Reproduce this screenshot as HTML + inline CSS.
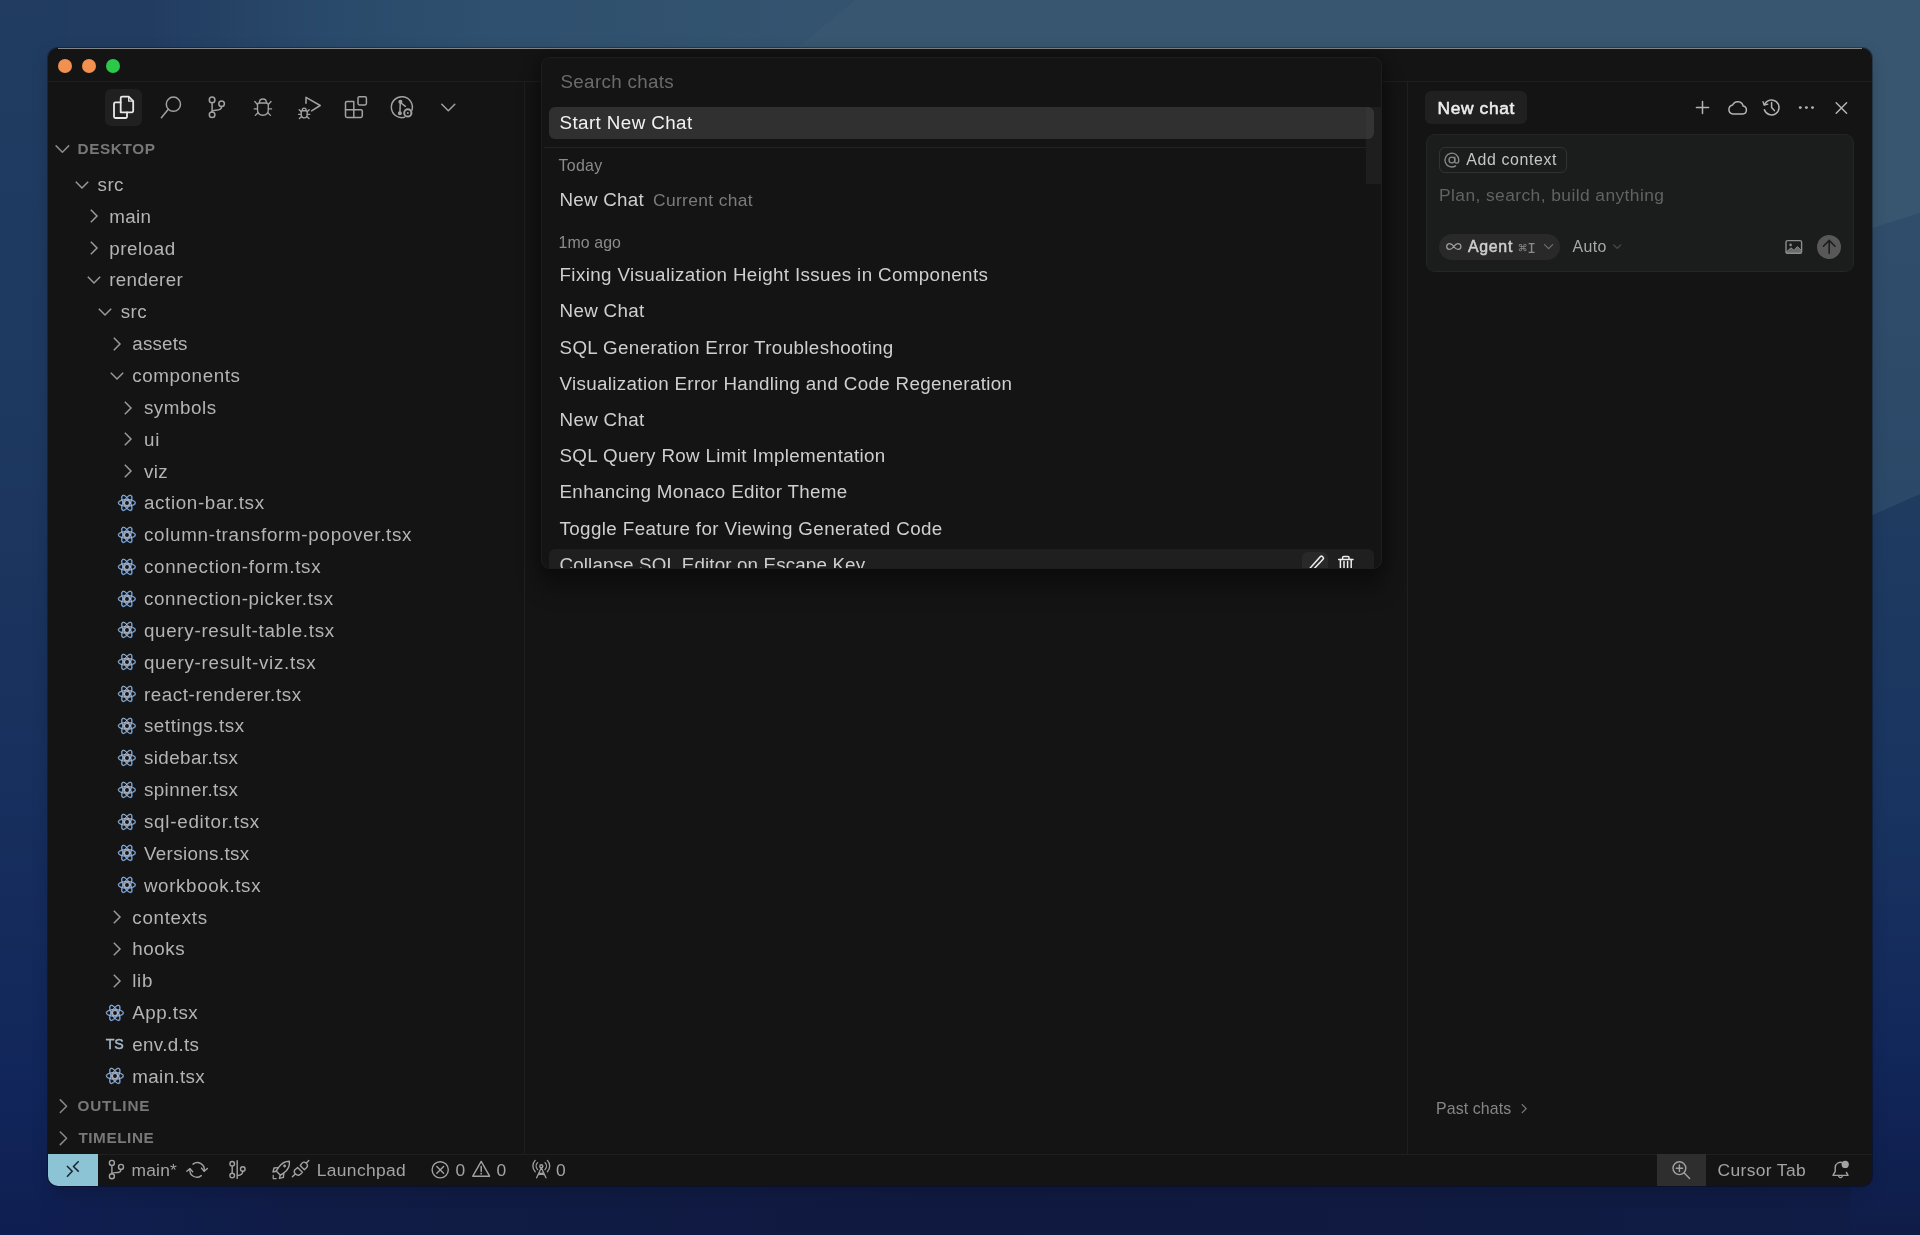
<!DOCTYPE html>
<html lang="en">
<head>
<meta charset="utf-8">
<title>Cursor - Search chats</title>
<style>
*{box-sizing:border-box}
html,body{margin:0;padding:0}
body{width:1920px;height:1235px;overflow:hidden;position:relative;
  font-family:"Liberation Sans",Arial,sans-serif;color:#b2b2b2;
  background:linear-gradient(180deg,#213c60 0px,#1e3960 400px,#172f5d 800px,#11255a 1100px,#0f1e50 1235px);
}
.ab{position:absolute}
.wtop{left:0;top:0;width:1920px;height:70px;background:linear-gradient(90deg,#213c60 0,#213c60 150px,#2a4a6b 330px,#2f506e 500px,#33536f 800px,#34546f 1920px)}
.wtop2{left:0;top:0;width:1920px;height:70px;background:#38566f;clip-path:polygon(855px 0,1920px 0,1920px 70px,771px 70px)}
.wright{left:1850px;top:0;width:70px;height:1235px;background:linear-gradient(180deg,#1f3b60 0,#1f3b60 520px,#193460 800px,#12275a 1050px,#0f1f4e 1190px,#101c46 1235px)}
.wright2{left:1850px;top:0;width:70px;height:540px;background:linear-gradient(180deg,#304d6b 0,#304d6b 230px,#2b4868 520px);clip-path:polygon(0 0,70px 0,70px 494px,0 525px)}
.wright3{left:1850px;top:0;width:70px;height:260px;background:#38566f;clip-path:polygon(0 0,70px 0,70px 213px,0 235px)}
.wbot{left:0;top:1170px;width:1920px;height:65px;background:linear-gradient(90deg,#0f1f52 0,#101c46 300px,#101a40 960px,#101b42 1500px,#101c46 1920px)}
.wtl{left:0;top:0;width:70px;height:1235px;background:linear-gradient(180deg,#213c60 0px,#1e3960 400px,#172f5d 800px,#11255a 1100px,#0f1e50 1235px);-webkit-mask-image:linear-gradient(90deg,#000 0,#000 40px,transparent 70px);mask-image:linear-gradient(90deg,#000 0,#000 40px,transparent 70px)}
.win{left:48px;top:48px;width:1824px;height:1138px;background:#141414;border-radius:10px;
  box-shadow:0 0 0 1px rgba(0,0,0,.3),0 6px 18px rgba(0,0,0,.14)}
.clip{left:0;top:0;width:1920px;height:1235px;clip-path:inset(48px 48px 49px 48px round 10px);will-change:transform;transform:translateZ(0)}
.hl{left:58px;top:48px;width:1804px;height:1px;background:rgba(255,255,255,.48)}
.line{background:#1f1f1f}
.tl{width:14px;height:14px;border-radius:50%;top:59px}
.hdr{font-size:15.3px;font-weight:700;color:#787878;letter-spacing:.42px;line-height:32px;white-space:nowrap}
.tr{font-size:18.8px;letter-spacing:.6px;line-height:31.86px;height:31.86px;white-space:nowrap;color:#b4b4b4}
.tsi{font-size:14.2px;font-weight:400;-webkit-text-stroke:.45px #a9b9cc;color:#a9b9cc;letter-spacing:-.2px;width:20px;text-align:center}
.sb{font-size:17.4px;line-height:33.4px;color:#a4a4a4;white-space:nowrap;letter-spacing:.35px;top:1154px}
.pop{left:541px;top:57px;width:841px;height:512px;background:#141414;border:1px solid #1e1e1e;border-radius:9px;overflow:hidden;
  }
.popsh{left:541px;top:57px;width:841px;height:512px;border-radius:9px;box-shadow:0 18px 22px 2px rgba(0,0,0,.32),0 0 16px 2px rgba(0,0,0,.3)}
.ci{font-size:18.8px;letter-spacing:.36px;line-height:36px;height:36px;white-space:nowrap;color:#cfcfcf}
.cg{font-size:15.9px;letter-spacing:.3px;line-height:24px;color:#8c8c8c;white-space:nowrap}
</style>
</head>
<body>
<div class="ab wtop"></div><div class="ab wtop2"></div><div class="ab wbot"></div><div class="ab wright"></div><div class="ab wright2"></div><div class="ab wright3"></div><div class="ab wtl"></div>
<div class="ab win"></div>
<div class="ab hl"></div>
<div class="ab clip">
  <!-- title bar -->
  <div class="ab line" style="left:48px;top:81px;width:1824px;height:1px"></div>
  <div class="ab tl" style="left:58px;background:#f2914f"></div>
  <div class="ab tl" style="left:82px;background:#f2914f"></div>
  <div class="ab tl" style="left:106px;background:#2bc84a"></div>

  <!-- sidebar -->
  <div class="ab line" style="left:524px;top:82px;width:1px;height:1072px"></div>
  <div class="ab" style="left:105px;top:89px;width:37px;height:37px;border-radius:6px;background:#202020"></div>
  <div class="ab hdr" style="left:77.6px;top:133px;letter-spacing:.6px">DESKTOP</div>
<svg class="ab" style="left:72.0px;top:174.5px" width="20" height="20" viewBox="-10 -10 20 20"><path d="M-6.2 -3.2 L0 3 L6.2 -3.2" fill="none" stroke="#9a9a9a" stroke-width="1.5"/></svg>
<div class="ab tr" style="left:97.6px;top:168.9px;letter-spacing:0.40px">src</div>
<svg class="ab" style="left:83.6px;top:206.4px" width="20" height="20" viewBox="-10 -10 20 20"><path d="M-3.2 -6.2 L3 0 L-3.2 6.2" fill="none" stroke="#9a9a9a" stroke-width="1.5"/></svg>
<div class="ab tr" style="left:109.2px;top:200.7px;letter-spacing:0.37px">main</div>
<svg class="ab" style="left:83.6px;top:238.2px" width="20" height="20" viewBox="-10 -10 20 20"><path d="M-3.2 -6.2 L3 0 L-3.2 6.2" fill="none" stroke="#9a9a9a" stroke-width="1.5"/></svg>
<div class="ab tr" style="left:109.2px;top:232.6px;letter-spacing:0.55px">preload</div>
<svg class="ab" style="left:83.6px;top:270.1px" width="20" height="20" viewBox="-10 -10 20 20"><path d="M-6.2 -3.2 L0 3 L6.2 -3.2" fill="none" stroke="#9a9a9a" stroke-width="1.5"/></svg>
<div class="ab tr" style="left:109.2px;top:264.4px;letter-spacing:0.36px">renderer</div>
<svg class="ab" style="left:95.2px;top:301.9px" width="20" height="20" viewBox="-10 -10 20 20"><path d="M-6.2 -3.2 L0 3 L6.2 -3.2" fill="none" stroke="#9a9a9a" stroke-width="1.5"/></svg>
<div class="ab tr" style="left:120.8px;top:296.3px;letter-spacing:0.40px">src</div>
<svg class="ab" style="left:106.7px;top:333.8px" width="20" height="20" viewBox="-10 -10 20 20"><path d="M-3.2 -6.2 L3 0 L-3.2 6.2" fill="none" stroke="#9a9a9a" stroke-width="1.5"/></svg>
<div class="ab tr" style="left:132.3px;top:328.2px;letter-spacing:0.18px">assets</div>
<svg class="ab" style="left:106.7px;top:365.6px" width="20" height="20" viewBox="-10 -10 20 20"><path d="M-6.2 -3.2 L0 3 L6.2 -3.2" fill="none" stroke="#9a9a9a" stroke-width="1.5"/></svg>
<div class="ab tr" style="left:132.3px;top:360.0px;letter-spacing:0.59px">components</div>
<svg class="ab" style="left:118.3px;top:397.5px" width="20" height="20" viewBox="-10 -10 20 20"><path d="M-3.2 -6.2 L3 0 L-3.2 6.2" fill="none" stroke="#9a9a9a" stroke-width="1.5"/></svg>
<div class="ab tr" style="left:143.9px;top:391.9px;letter-spacing:0.55px">symbols</div>
<svg class="ab" style="left:118.3px;top:429.4px" width="20" height="20" viewBox="-10 -10 20 20"><path d="M-3.2 -6.2 L3 0 L-3.2 6.2" fill="none" stroke="#9a9a9a" stroke-width="1.5"/></svg>
<div class="ab tr" style="left:143.9px;top:423.7px;letter-spacing:1.00px">ui</div>
<svg class="ab" style="left:118.3px;top:461.2px" width="20" height="20" viewBox="-10 -10 20 20"><path d="M-3.2 -6.2 L3 0 L-3.2 6.2" fill="none" stroke="#9a9a9a" stroke-width="1.5"/></svg>
<div class="ab tr" style="left:143.9px;top:455.6px;letter-spacing:0.40px">viz</div>
<svg class="ab" style="left:116.5px;top:493.0px" width="20" height="20" viewBox="-10 -10 20 20" fill="none" stroke="#7f9fca" stroke-width="1.15"><g stroke="#4f7db8" stroke-width="1.25"><ellipse rx="8.5" ry="3.3"/><ellipse rx="8.5" ry="3.3" transform="rotate(60)"/><ellipse rx="8.5" ry="3.3" transform="rotate(120)"/></g><g stroke="#c8ccd0" stroke-opacity=".72" stroke-width=".75" transform="translate(-.35 -.3)"><ellipse rx="8.5" ry="3.3"/><ellipse rx="8.5" ry="3.3" transform="rotate(60)"/><ellipse rx="8.5" ry="3.3" transform="rotate(120)"/></g><circle r="2.5" stroke="#b0b4ba" stroke-width="1.1"/></svg>
<div class="ab tr" style="left:143.9px;top:487.4px;letter-spacing:0.65px">action-bar.tsx</div>
<svg class="ab" style="left:116.5px;top:524.8px" width="20" height="20" viewBox="-10 -10 20 20" fill="none" stroke="#7f9fca" stroke-width="1.15"><g stroke="#4f7db8" stroke-width="1.25"><ellipse rx="8.5" ry="3.3"/><ellipse rx="8.5" ry="3.3" transform="rotate(60)"/><ellipse rx="8.5" ry="3.3" transform="rotate(120)"/></g><g stroke="#c8ccd0" stroke-opacity=".72" stroke-width=".75" transform="translate(-.35 -.3)"><ellipse rx="8.5" ry="3.3"/><ellipse rx="8.5" ry="3.3" transform="rotate(60)"/><ellipse rx="8.5" ry="3.3" transform="rotate(120)"/></g><circle r="2.5" stroke="#b0b4ba" stroke-width="1.1"/></svg>
<div class="ab tr" style="left:143.9px;top:519.3px;letter-spacing:0.71px">column-transform-popover.tsx</div>
<svg class="ab" style="left:116.5px;top:556.7px" width="20" height="20" viewBox="-10 -10 20 20" fill="none" stroke="#7f9fca" stroke-width="1.15"><g stroke="#4f7db8" stroke-width="1.25"><ellipse rx="8.5" ry="3.3"/><ellipse rx="8.5" ry="3.3" transform="rotate(60)"/><ellipse rx="8.5" ry="3.3" transform="rotate(120)"/></g><g stroke="#c8ccd0" stroke-opacity=".72" stroke-width=".75" transform="translate(-.35 -.3)"><ellipse rx="8.5" ry="3.3"/><ellipse rx="8.5" ry="3.3" transform="rotate(60)"/><ellipse rx="8.5" ry="3.3" transform="rotate(120)"/></g><circle r="2.5" stroke="#b0b4ba" stroke-width="1.1"/></svg>
<div class="ab tr" style="left:143.9px;top:551.2px;letter-spacing:0.71px">connection-form.tsx</div>
<svg class="ab" style="left:116.5px;top:588.5px" width="20" height="20" viewBox="-10 -10 20 20" fill="none" stroke="#7f9fca" stroke-width="1.15"><g stroke="#4f7db8" stroke-width="1.25"><ellipse rx="8.5" ry="3.3"/><ellipse rx="8.5" ry="3.3" transform="rotate(60)"/><ellipse rx="8.5" ry="3.3" transform="rotate(120)"/></g><g stroke="#c8ccd0" stroke-opacity=".72" stroke-width=".75" transform="translate(-.35 -.3)"><ellipse rx="8.5" ry="3.3"/><ellipse rx="8.5" ry="3.3" transform="rotate(60)"/><ellipse rx="8.5" ry="3.3" transform="rotate(120)"/></g><circle r="2.5" stroke="#b0b4ba" stroke-width="1.1"/></svg>
<div class="ab tr" style="left:143.9px;top:583.0px;letter-spacing:0.69px">connection-picker.tsx</div>
<svg class="ab" style="left:116.5px;top:620.4px" width="20" height="20" viewBox="-10 -10 20 20" fill="none" stroke="#7f9fca" stroke-width="1.15"><g stroke="#4f7db8" stroke-width="1.25"><ellipse rx="8.5" ry="3.3"/><ellipse rx="8.5" ry="3.3" transform="rotate(60)"/><ellipse rx="8.5" ry="3.3" transform="rotate(120)"/></g><g stroke="#c8ccd0" stroke-opacity=".72" stroke-width=".75" transform="translate(-.35 -.3)"><ellipse rx="8.5" ry="3.3"/><ellipse rx="8.5" ry="3.3" transform="rotate(60)"/><ellipse rx="8.5" ry="3.3" transform="rotate(120)"/></g><circle r="2.5" stroke="#b0b4ba" stroke-width="1.1"/></svg>
<div class="ab tr" style="left:143.9px;top:614.9px;letter-spacing:0.71px">query-result-table.tsx</div>
<svg class="ab" style="left:116.5px;top:652.3px" width="20" height="20" viewBox="-10 -10 20 20" fill="none" stroke="#7f9fca" stroke-width="1.15"><g stroke="#4f7db8" stroke-width="1.25"><ellipse rx="8.5" ry="3.3"/><ellipse rx="8.5" ry="3.3" transform="rotate(60)"/><ellipse rx="8.5" ry="3.3" transform="rotate(120)"/></g><g stroke="#c8ccd0" stroke-opacity=".72" stroke-width=".75" transform="translate(-.35 -.3)"><ellipse rx="8.5" ry="3.3"/><ellipse rx="8.5" ry="3.3" transform="rotate(60)"/><ellipse rx="8.5" ry="3.3" transform="rotate(120)"/></g><circle r="2.5" stroke="#b0b4ba" stroke-width="1.1"/></svg>
<div class="ab tr" style="left:143.9px;top:646.7px;letter-spacing:0.74px">query-result-viz.tsx</div>
<svg class="ab" style="left:116.5px;top:684.1px" width="20" height="20" viewBox="-10 -10 20 20" fill="none" stroke="#7f9fca" stroke-width="1.15"><g stroke="#4f7db8" stroke-width="1.25"><ellipse rx="8.5" ry="3.3"/><ellipse rx="8.5" ry="3.3" transform="rotate(60)"/><ellipse rx="8.5" ry="3.3" transform="rotate(120)"/></g><g stroke="#c8ccd0" stroke-opacity=".72" stroke-width=".75" transform="translate(-.35 -.3)"><ellipse rx="8.5" ry="3.3"/><ellipse rx="8.5" ry="3.3" transform="rotate(60)"/><ellipse rx="8.5" ry="3.3" transform="rotate(120)"/></g><circle r="2.5" stroke="#b0b4ba" stroke-width="1.1"/></svg>
<div class="ab tr" style="left:143.9px;top:678.6px;letter-spacing:0.59px">react-renderer.tsx</div>
<svg class="ab" style="left:116.5px;top:716.0px" width="20" height="20" viewBox="-10 -10 20 20" fill="none" stroke="#7f9fca" stroke-width="1.15"><g stroke="#4f7db8" stroke-width="1.25"><ellipse rx="8.5" ry="3.3"/><ellipse rx="8.5" ry="3.3" transform="rotate(60)"/><ellipse rx="8.5" ry="3.3" transform="rotate(120)"/></g><g stroke="#c8ccd0" stroke-opacity=".72" stroke-width=".75" transform="translate(-.35 -.3)"><ellipse rx="8.5" ry="3.3"/><ellipse rx="8.5" ry="3.3" transform="rotate(60)"/><ellipse rx="8.5" ry="3.3" transform="rotate(120)"/></g><circle r="2.5" stroke="#b0b4ba" stroke-width="1.1"/></svg>
<div class="ab tr" style="left:143.9px;top:710.4px;letter-spacing:0.57px">settings.tsx</div>
<svg class="ab" style="left:116.5px;top:747.8px" width="20" height="20" viewBox="-10 -10 20 20" fill="none" stroke="#7f9fca" stroke-width="1.15"><g stroke="#4f7db8" stroke-width="1.25"><ellipse rx="8.5" ry="3.3"/><ellipse rx="8.5" ry="3.3" transform="rotate(60)"/><ellipse rx="8.5" ry="3.3" transform="rotate(120)"/></g><g stroke="#c8ccd0" stroke-opacity=".72" stroke-width=".75" transform="translate(-.35 -.3)"><ellipse rx="8.5" ry="3.3"/><ellipse rx="8.5" ry="3.3" transform="rotate(60)"/><ellipse rx="8.5" ry="3.3" transform="rotate(120)"/></g><circle r="2.5" stroke="#b0b4ba" stroke-width="1.1"/></svg>
<div class="ab tr" style="left:143.9px;top:742.3px;letter-spacing:0.42px">sidebar.tsx</div>
<svg class="ab" style="left:116.5px;top:779.7px" width="20" height="20" viewBox="-10 -10 20 20" fill="none" stroke="#7f9fca" stroke-width="1.15"><g stroke="#4f7db8" stroke-width="1.25"><ellipse rx="8.5" ry="3.3"/><ellipse rx="8.5" ry="3.3" transform="rotate(60)"/><ellipse rx="8.5" ry="3.3" transform="rotate(120)"/></g><g stroke="#c8ccd0" stroke-opacity=".72" stroke-width=".75" transform="translate(-.35 -.3)"><ellipse rx="8.5" ry="3.3"/><ellipse rx="8.5" ry="3.3" transform="rotate(60)"/><ellipse rx="8.5" ry="3.3" transform="rotate(120)"/></g><circle r="2.5" stroke="#b0b4ba" stroke-width="1.1"/></svg>
<div class="ab tr" style="left:143.9px;top:774.2px;letter-spacing:0.42px">spinner.tsx</div>
<svg class="ab" style="left:116.5px;top:811.5px" width="20" height="20" viewBox="-10 -10 20 20" fill="none" stroke="#7f9fca" stroke-width="1.15"><g stroke="#4f7db8" stroke-width="1.25"><ellipse rx="8.5" ry="3.3"/><ellipse rx="8.5" ry="3.3" transform="rotate(60)"/><ellipse rx="8.5" ry="3.3" transform="rotate(120)"/></g><g stroke="#c8ccd0" stroke-opacity=".72" stroke-width=".75" transform="translate(-.35 -.3)"><ellipse rx="8.5" ry="3.3"/><ellipse rx="8.5" ry="3.3" transform="rotate(60)"/><ellipse rx="8.5" ry="3.3" transform="rotate(120)"/></g><circle r="2.5" stroke="#b0b4ba" stroke-width="1.1"/></svg>
<div class="ab tr" style="left:143.9px;top:806.0px;letter-spacing:0.76px">sql-editor.tsx</div>
<svg class="ab" style="left:116.5px;top:843.4px" width="20" height="20" viewBox="-10 -10 20 20" fill="none" stroke="#7f9fca" stroke-width="1.15"><g stroke="#4f7db8" stroke-width="1.25"><ellipse rx="8.5" ry="3.3"/><ellipse rx="8.5" ry="3.3" transform="rotate(60)"/><ellipse rx="8.5" ry="3.3" transform="rotate(120)"/></g><g stroke="#c8ccd0" stroke-opacity=".72" stroke-width=".75" transform="translate(-.35 -.3)"><ellipse rx="8.5" ry="3.3"/><ellipse rx="8.5" ry="3.3" transform="rotate(60)"/><ellipse rx="8.5" ry="3.3" transform="rotate(120)"/></g><circle r="2.5" stroke="#b0b4ba" stroke-width="1.1"/></svg>
<div class="ab tr" style="left:143.9px;top:837.9px;letter-spacing:0.37px">Versions.tsx</div>
<svg class="ab" style="left:116.5px;top:875.3px" width="20" height="20" viewBox="-10 -10 20 20" fill="none" stroke="#7f9fca" stroke-width="1.15"><g stroke="#4f7db8" stroke-width="1.25"><ellipse rx="8.5" ry="3.3"/><ellipse rx="8.5" ry="3.3" transform="rotate(60)"/><ellipse rx="8.5" ry="3.3" transform="rotate(120)"/></g><g stroke="#c8ccd0" stroke-opacity=".72" stroke-width=".75" transform="translate(-.35 -.3)"><ellipse rx="8.5" ry="3.3"/><ellipse rx="8.5" ry="3.3" transform="rotate(60)"/><ellipse rx="8.5" ry="3.3" transform="rotate(120)"/></g><circle r="2.5" stroke="#b0b4ba" stroke-width="1.1"/></svg>
<div class="ab tr" style="left:143.9px;top:869.7px;letter-spacing:0.64px">workbook.tsx</div>
<svg class="ab" style="left:106.7px;top:907.2px" width="20" height="20" viewBox="-10 -10 20 20"><path d="M-3.2 -6.2 L3 0 L-3.2 6.2" fill="none" stroke="#9a9a9a" stroke-width="1.5"/></svg>
<div class="ab tr" style="left:132.3px;top:901.6px;letter-spacing:0.70px">contexts</div>
<svg class="ab" style="left:106.7px;top:939.1px" width="20" height="20" viewBox="-10 -10 20 20"><path d="M-3.2 -6.2 L3 0 L-3.2 6.2" fill="none" stroke="#9a9a9a" stroke-width="1.5"/></svg>
<div class="ab tr" style="left:132.3px;top:933.4px;letter-spacing:0.55px">hooks</div>
<svg class="ab" style="left:106.7px;top:970.9px" width="20" height="20" viewBox="-10 -10 20 20"><path d="M-3.2 -6.2 L3 0 L-3.2 6.2" fill="none" stroke="#9a9a9a" stroke-width="1.5"/></svg>
<div class="ab tr" style="left:132.3px;top:965.3px;letter-spacing:0.65px">lib</div>
<svg class="ab" style="left:104.9px;top:1002.7px" width="20" height="20" viewBox="-10 -10 20 20" fill="none" stroke="#7f9fca" stroke-width="1.15"><g stroke="#4f7db8" stroke-width="1.25"><ellipse rx="8.5" ry="3.3"/><ellipse rx="8.5" ry="3.3" transform="rotate(60)"/><ellipse rx="8.5" ry="3.3" transform="rotate(120)"/></g><g stroke="#c8ccd0" stroke-opacity=".72" stroke-width=".75" transform="translate(-.35 -.3)"><ellipse rx="8.5" ry="3.3"/><ellipse rx="8.5" ry="3.3" transform="rotate(60)"/><ellipse rx="8.5" ry="3.3" transform="rotate(120)"/></g><circle r="2.5" stroke="#b0b4ba" stroke-width="1.1"/></svg>
<div class="ab tr" style="left:132.3px;top:997.2px;letter-spacing:0.45px">App.tsx</div>
<div class="ab tsi" style="left:104.6px;top:1029.1px;line-height:31.86px">TS</div>
<div class="ab tr" style="left:132.3px;top:1029.0px;letter-spacing:0.33px">env.d.ts</div>
<svg class="ab" style="left:104.9px;top:1066.4px" width="20" height="20" viewBox="-10 -10 20 20" fill="none" stroke="#7f9fca" stroke-width="1.15"><g stroke="#4f7db8" stroke-width="1.25"><ellipse rx="8.5" ry="3.3"/><ellipse rx="8.5" ry="3.3" transform="rotate(60)"/><ellipse rx="8.5" ry="3.3" transform="rotate(120)"/></g><g stroke="#c8ccd0" stroke-opacity=".72" stroke-width=".75" transform="translate(-.35 -.3)"><ellipse rx="8.5" ry="3.3"/><ellipse rx="8.5" ry="3.3" transform="rotate(60)"/><ellipse rx="8.5" ry="3.3" transform="rotate(120)"/></g><circle r="2.5" stroke="#b0b4ba" stroke-width="1.1"/></svg>
<div class="ab tr" style="left:132.3px;top:1060.9px;letter-spacing:0.36px">main.tsx</div>
  <div class="ab hdr" style="left:77.6px;top:1090.2px;letter-spacing:.78px">OUTLINE</div>
  <div class="ab hdr" style="left:78.4px;top:1121.9px;letter-spacing:.56px">TIMELINE</div>

  <!-- chat panel -->
  <div class="ab line" style="left:1407px;top:82px;width:1px;height:1072px"></div>
  <div class="ab" style="left:1425px;top:91px;width:102px;height:33px;border-radius:6px;background:#202020"></div>
  <div class="ab" style="left:1437.5px;top:91px;line-height:34.6px;font-size:17.4px;font-weight:400;-webkit-text-stroke:.55px #ededed;color:#ededed;letter-spacing:.62px;white-space:nowrap">New chat</div>
  <div class="ab" style="left:1426px;top:134px;width:428px;height:138px;border-radius:9px;background:#1b1c1c;border:1px solid #242525"></div>
  <div class="ab" style="left:1439px;top:147px;width:128px;height:26px;border-radius:6px;border:1px solid #323232"></div>
  <div class="ab" style="left:1466.3px;top:147px;line-height:26px;font-size:15.9px;color:#c6c6c6;letter-spacing:.62px;white-space:nowrap">Add context</div>
  <div class="ab" style="left:1439px;top:181px;line-height:28px;font-size:17.4px;color:#626262;letter-spacing:.42px;white-space:nowrap">Plan, search, build anything</div>
  <div class="ab" style="left:1439px;top:234px;width:121px;height:26px;border-radius:13px;background:#292929"></div>
  <div class="ab" style="left:1468px;top:234px;line-height:26px;font-size:15.9px;font-weight:400;-webkit-text-stroke:.5px #cdcdcd;color:#cdcdcd;letter-spacing:.7px;white-space:nowrap">Agent</div>
  <div class="ab" style="left:1518.5px;top:235px;line-height:26px;font-size:14.4px;font-family:'DejaVu Sans Mono','Liberation Mono',monospace;color:#8a8a8a;white-space:nowrap;letter-spacing:.2px">⌘I</div>
  <div class="ab" style="left:1572.5px;top:234px;line-height:26px;font-size:15.9px;color:#a8a8a8;letter-spacing:.42px;white-space:nowrap">Auto</div>
  <div class="ab" style="left:1817px;top:234.7px;width:24.4px;height:24.4px;border-radius:50%;background:#585858"></div>
  <div class="ab" style="left:1436px;top:1097px;line-height:24px;font-size:15.9px;color:#868686;letter-spacing:.1px;white-space:nowrap">Past chats</div>

  <!-- status bar -->
  <div class="ab line" style="left:48px;top:1154px;width:1824px;height:1px"></div>
  <div class="ab" style="left:48px;top:1154px;width:50px;height:32px;background:#8cc3d5"></div>
  <div class="ab" style="left:1657px;top:1154px;width:49px;height:32px;background:#2e2e2e"></div>
  <div class="ab sb" style="left:131.5px;letter-spacing:.22px">main*</div>
  <div class="ab sb" style="left:316.8px">Launchpad</div>
  <div class="ab sb" style="left:455.6px">0</div>
  <div class="ab sb" style="left:496.6px">0</div>
  <div class="ab sb" style="left:555.9px">0</div>
  <div class="ab sb" style="left:1717.5px;letter-spacing:.38px">Cursor Tab</div>

  <!-- popup -->
  <div class="ab popsh"></div>
  <div class="ab pop">
    <div class="ab" style="left:18.5px;top:10px;line-height:28px;font-size:18.8px;color:#6b6b6b;letter-spacing:.32px;white-space:nowrap">Search chats</div>
    <div class="ab" style="left:7px;top:49px;width:825px;height:32px;border-radius:6px;background:#303030"></div>
    <div class="ab" style="left:824px;top:49px;width:16px;height:77px;background:rgba(70,70,70,.2)"></div>
    <div class="ab ci" style="left:17.5px;top:47px;color:#f2f2f2;letter-spacing:.41px">Start New Chat</div>
    <div class="ab" style="left:2px;top:89px;width:822px;height:1px;background:#222"></div>
    <div class="ab cg" style="left:16.5px;top:95.5px">Today</div>
    <div class="ab ci" style="left:17.5px;top:124px;letter-spacing:.24px">New Chat</div>
    <div class="ab" style="left:111px;top:123.6px;line-height:36px;font-size:17.4px;color:#7c7c7c;letter-spacing:.36px;white-space:nowrap">Current chat</div>
    <div class="ab cg" style="left:16.5px;top:172.5px;letter-spacing:.1px">1mo ago</div>
    <div class="ab" style="left:7px;top:491px;width:825px;height:32px;border-radius:6px;background:#1f1f1f"></div>
    <div class="ab" style="left:759.5px;top:494px;width:26px;height:26px;border-radius:6px;background:#292929"></div>
<div class="ab ci" style="left:17.5px;top:199.2px;letter-spacing:0.370px">Fixing Visualization Height Issues in Components</div>
<div class="ab ci" style="left:17.5px;top:235.4px;letter-spacing:0.314px">New Chat</div>
<div class="ab ci" style="left:17.5px;top:271.6px;letter-spacing:0.369px">SQL Generation Error Troubleshooting</div>
<div class="ab ci" style="left:17.5px;top:307.8px;letter-spacing:0.335px">Visualization Error Handling and Code Regeneration</div>
<div class="ab ci" style="left:17.5px;top:344.0px;letter-spacing:0.314px">New Chat</div>
<div class="ab ci" style="left:17.5px;top:380.2px;letter-spacing:0.342px">SQL Query Row Limit Implementation</div>
<div class="ab ci" style="left:17.5px;top:416.4px;letter-spacing:0.332px">Enhancing Monaco Editor Theme</div>
<div class="ab ci" style="left:17.5px;top:452.6px;letter-spacing:0.390px">Toggle Feature for Viewing Generated Code</div>
<div class="ab ci" style="left:17.5px;top:488.8px;letter-spacing:0.141px">Collapse SQL Editor on Escape Key</div>
  </div>

  <!-- icon overlay -->
  <svg class="ab" style="left:0;top:0" width="1920" height="1235" viewBox="0 0 1920 1235" fill="none" stroke-linecap="round" stroke-linejoin="round">
    <defs><clipPath id="pc"><rect x="542" y="58" width="839" height="510"/></clipPath></defs>
    <!-- DESKTOP / OUTLINE / TIMELINE chevrons -->
    <g stroke="#8a8a8a" stroke-width="1.5">
      <path d="M56.1 145.9 L62.4 152.2 L68.7 145.9"/>
      <path d="M60.3 1099.9 L66.6 1106.2 L60.3 1112.5"/>
      <path d="M60.3 1132 L66.6 1138.3 L60.3 1144.6"/>
    </g>

    <!-- activity bar -->
    <g transform="translate(123.5 107.3)" stroke="#e8e8e8" stroke-width="1.8">
      <path d="M-2.8 5 V-9.1 Q-2.8 -10.6 -1.3 -10.6 H5.2 L9.7 -6.1 V3.5 Q9.7 5 8.2 5 Z"/>
      <path d="M5.2 -10.2 V-6.1 H9.3" stroke-width="1.3"/>
      <path d="M-2.8 -4.9 H-8 Q-9.5 -4.9 -9.5 -3.4 V9.2 Q-9.5 10.7 -8 10.7 H2 Q3.5 10.7 3.5 9.2 V5"/>
    </g>
    <g stroke="#a2a2a2" stroke-width="1.5">
      <!-- search -->
      <circle cx="173.4" cy="104.2" r="7.1"/>
      <path d="M168.3 109.3 L161.4 117.7"/>
      <!-- source control -->
      <circle cx="212.1" cy="99.9" r="2.8"/>
      <circle cx="212.1" cy="114.8" r="2.8"/>
      <circle cx="221.6" cy="103.8" r="2.8"/>
      <path d="M212.1 102.7 V112"/>
      <path d="M221.6 106.6 C221.6 109.6 219 110.2 216 110.2 C213.5 110.2 212.1 111 212.1 112"/>
      <!-- bug -->
      <g transform="translate(262.9 107.1) scale(.9)">
        <path d="M-6 -2.5 Q-6 -4.6 -4 -4.6 H4 Q6 -4.6 6 -2.5 V3 Q6 9 0 9 Q-6 9 -6 3 Z"/>
        <path d="M-3.9 -4.8 Q-3.9 -9 0 -9 Q3.9 -9 3.9 -4.8"/>
        <path d="M-6 -2.8 L-9 -6.2 M6 -2.8 L9 -6.2 M-6 2 H-9.6 M6 2 H9.6 M-5.2 6 L-8.4 9.2 M5.2 6 L8.4 9.2"/>
      </g>
      <!-- run and debug -->
      <g transform="translate(309 107.3)">
        <path d="M-3 -4 V-10 L11.2 -1.8 L2.6 3.6"/>
        <g transform="translate(-4.8 5.6)" stroke-width="1.35">
          <path d="M-3 -1 Q-3 -2.2 -1.8 -2.2 H1.8 Q3 -2.2 3 -1 V1.6 Q3 5 0 5 Q-3 5 -3 1.6 Z"/>
          <path d="M-2 -2.4 Q-2 -4.8 0 -4.8 Q2 -4.8 2 -2.4"/>
          <path d="M-3 -1.2 L-5 -3.2 M3 -1.2 L5 -3.2 M-3 1.4 H-5.6 M3 1.4 H5.6 M-2.6 3.6 L-4.8 5.6 M2.6 3.6 L4.8 5.6"/>
        </g>
      </g>
      <!-- extensions -->
      <g>
        <path d="M345.5 102.8 Q345.5 101.4 346.9 101.4 H353.8 V109.7 H360.9 Q362.3 109.7 362.3 111.1 V116.1 Q362.3 117.5 360.9 117.5 H346.9 Q345.5 117.5 345.5 116.1 Z"/>
        <path d="M345.5 109.7 H353.8 V117.5"/>
        <rect x="358" y="96.8" width="8.4" height="8.2" rx="1.4"/>
      </g>
      <!-- gitlens inspect -->
      <g>
        <path d="M404.6 117.3 A10.5 10.5 0 1 1 411.9 110.2"/>
        <circle cx="400.4" cy="101.8" r="1.3" fill="#a2a2a2"/>
        <circle cx="399.9" cy="113.2" r="1.3" fill="#a2a2a2"/>
        <path d="M400.3 102 L399.9 113 M400.4 102.5 L405.4 106.3"/>
        <circle cx="407.8" cy="112.9" r="3.6" stroke-width="2"/>
        <circle cx="407.8" cy="112.9" r="1" fill="#a2a2a2" stroke="none"/>
      </g>
      <!-- chevron -->
      <path d="M441.8 104.3 L448.3 110.8 L454.8 104.3"/>
    </g>

    <!-- chat panel header icons -->
    <g stroke="#b4b4b4" stroke-width="1.5">
      <path d="M1696.4 107.5 H1708.6 M1702.5 101.4 V113.6"/>
      <path d="M1732.6 114 H1742.8 A4 4 0 0 0 1743.2 106.1 A5.6 5.6 0 0 0 1732.6 105 A4.6 4.6 0 0 0 1732.6 114 Z"/>
      <g>
        <path d="M1764.6 104.5 A7.5 7.5 0 1 1 1764.4 109.8"/>
        <path d="M1763 101.6 L1764.2 105.2 L1767.8 104.2" stroke-width="1.3"/>
        <path d="M1771.6 102.6 V107.6 L1774.4 110.6"/>
      </g>
      <g fill="#b4b4b4" stroke="none"><circle cx="1800.3" cy="107.6" r="1.45"/><circle cx="1806.4" cy="107.6" r="1.45"/><circle cx="1812.5" cy="107.6" r="1.45"/></g>
      <path d="M1836.2 102.8 L1846.6 113.2 M1846.6 102.8 L1836.2 113.2"/>
    </g>

    <!-- chat input icons -->
    <g stroke="#8a8a8a" stroke-width="1.3">
      <circle cx="1451.9" cy="160" r="2.9"/>
      <path d="M1454.8 157.2 V161.4 Q1454.8 163.2 1456.6 163.2 Q1458.8 163.2 1458.8 160 A6.9 6.9 0 1 0 1455.6 165.9"/>
    </g>
    <path d="M1453.8 246.5 C1455.8 243.6 1457 243.6 1458 243.6 A2.9 2.9 0 0 1 1458 249.4 C1457 249.4 1455.8 249.4 1453.8 246.5 C1451.8 243.6 1450.6 243.6 1449.6 243.6 A2.9 2.9 0 0 0 1449.6 249.4 C1450.6 249.4 1451.8 249.4 1453.8 246.5 Z" stroke="#a0a0a0" stroke-width="1.25"/>
    <path d="M1544.6 244.6 L1548.6 248.6 L1552.6 244.6" stroke="#6e6e6e" stroke-width="1.3"/>
    <path d="M1613.8 245 L1617.2 248.4 L1620.6 245" stroke="#484848" stroke-width="1.3"/>
    <g stroke="#8c8c8c" stroke-width="1.4">
      <rect x="1786" y="240.6" width="15.6" height="12.8" rx="1.6"/>
      <circle cx="1790.6" cy="244.9" r="1.3" fill="#8c8c8c" stroke="none"/>
      <path d="M1786.4 252 L1791 247.8 L1794 250.4 L1797.4 246.6 L1801.4 250.6 V253 H1786.4 Z" fill="#6a6a6a" stroke-width="1"/>
    </g>
    <path d="M1829.2 253.2 V240.6 M1823.4 246.2 L1829.2 240.4 L1835 246.2" stroke="#1d1d1d" stroke-width="1.6"/>
    <path d="M1522.2 1104.6 L1526.2 1108.6 L1522.2 1112.6" stroke="#7a7a7a" stroke-width="1.3"/>

    <!-- popup row icons -->
    <g clip-path="url(#pc)" stroke="#ededed" stroke-width="1.5">
      <path d="M1308.4 570 L1320.4 556.6 Q1321.4 555.6 1322.4 556.6 L1323 557.2 Q1324 558.2 1323 559.2 L1312 571"/>
      <g stroke-width="1.5">
        <path d="M1338.6 559.4 H1353 M1342.6 559.2 V557.6 Q1342.6 556.4 1343.8 556.4 H1347.8 Q1349 556.4 1349 557.6 V559.2"/>
        <path d="M1340.4 559.6 V572 M1351.2 559.6 V572 M1344 561.6 V572 M1347.6 561.6 V572"/>
      </g>
    </g>

    <!-- status bar -->
    <g stroke="#1b2230" stroke-width="1.5" stroke-linecap="butt" stroke-linejoin="miter">
      <path d="M67 1166 L72.2 1171.3 L67 1176.8"/>
      <path d="M78.7 1161.2 L73.5 1166.5 L78.7 1171.6"/>
    </g>
    <g stroke="#a2a2a2" stroke-width="1.4">
      <!-- branch -->
      <circle cx="111.9" cy="1162.9" r="2.5"/><circle cx="111.9" cy="1176.3" r="2.5"/><circle cx="121" cy="1166.9" r="2.5"/>
      <path d="M111.9 1165.4 V1173.8 M121 1169.4 C121 1172.4 118 1172.6 115.6 1172.6 C113 1172.6 111.9 1173 111.9 1173.8"/>
      <!-- sync -->
      <g transform="rotate(36 197 1169.9)">
        <path d="M190.4 1167.6 A7 7 0 0 1 203.4 1166.4"/>
        <path d="M203.8 1172 A7 7 0 0 1 190.8 1173.4"/>
        <path d="M204.6 1162.6 L203.6 1166.8 L199.6 1165.8"/>
        <path d="M189.6 1177 L190.6 1173 L194.6 1174"/>
      </g>
      <!-- graph -->
      <g>
        <circle cx="232.2" cy="1163.8" r="2.3"/><circle cx="232.2" cy="1175.6" r="2.3"/><circle cx="242.8" cy="1169" r="2.3"/>
        <path d="M232.2 1166.1 V1173.3 M237.2 1160.8 V1178.4 M242.8 1171.3 C242.8 1174.6 240 1175.4 237.4 1175.6"/>
      </g>
      <!-- rocket -->
      <g>
        <path d="M289.4 1161.2 C285.4 1161.2 281.4 1163.4 278.6 1167.4 L276.2 1171 L280.4 1175.2 L284 1172.8 C288 1170 289.8 1165.8 289.4 1161.2 Z"/>
        <circle cx="284.6" cy="1166" r="1.4" fill="#a2a2a2" stroke="none"/>
        <path d="M278.4 1167.6 L274 1168 L273 1172 L276 1171.2 M283.8 1173 L283.4 1177.4 L279.4 1178.4 L280.2 1175.4"/>
        <path d="M273.2 1175.4 V1178.6 H276.2" stroke-width="1.2"/>
      </g>
      <!-- plug -->
      <g>
        <path d="M297.6 1167.4 L302.4 1172.2 L300.4 1174.2 Q298 1176.4 295.6 1174 L295.2 1173.6 Q293 1171.4 295.4 1169.4 Z"/>
        <path d="M295 1174.2 L292.4 1176.8"/>
        <path d="M300.2 1165.6 L304.4 1169.8 L306.4 1167.8 Q308.6 1165.4 306.4 1163.4 L306 1163 Q303.8 1161 301.8 1163.4 Z"/>
        <path d="M306.6 1162.8 L308.8 1160.6"/>
      </g>
      <!-- error / warning -->
      <circle cx="440.2" cy="1169.8" r="8.1"/>
      <path d="M436.8 1166.4 L443.6 1173.2 M443.6 1166.4 L436.8 1173.2"/>
      <path d="M481.2 1161.4 L489.6 1176.2 H472.8 Z"/>
      <path d="M481.2 1166.4 V1171.4" stroke-width="1.5"/><circle cx="481.2" cy="1173.7" r=".9" fill="#a2a2a2" stroke="none"/>
      <!-- radio tower -->
      <g>
        <path d="M541.3 1167.8 L536.6 1177.8 M541.3 1167.8 L546 1177.8 M538.4 1174.4 H544.2 M539 1172.6 L543.8 1174.6 M543.6 1172.6 L538.8 1174.6" stroke-width="1.3"/>
        <circle cx="541.3" cy="1166.2" r="1.5"/>
        <path d="M537.6 1169.6 A5 5 0 0 1 537.6 1162.6 M545 1169.6 A5 5 0 0 0 545 1162.6" stroke-width="1.3"/>
        <path d="M535.2 1171.8 A8.2 8.2 0 0 1 535.2 1160.4 M547.4 1171.8 A8.2 8.2 0 0 0 547.4 1160.4" stroke-width="1.3"/>
      </g>
      <!-- zoom -->
      <circle cx="1679.4" cy="1168.2" r="6.4"/>
      <path d="M1684 1172.8 L1689.6 1178.4 M1676.2 1168.2 H1682.6 M1679.4 1165 V1171.4"/>
      <!-- bell -->
      <g>
        <path d="M1843 1162.8 A5.4 5.4 0 0 0 1835.2 1167.4 V1171.4 L1833 1175.4 H1848 L1846.4 1172.4"/>
        <path d="M1838.8 1176.6 Q1840.5 1178.6 1842.2 1176.6" />
        <circle cx="1845.2" cy="1164.4" r="3.6" fill="#a2a2a2" stroke="none"/>
      </g>
    </g>

  </svg>
</div>
</body>
</html>
